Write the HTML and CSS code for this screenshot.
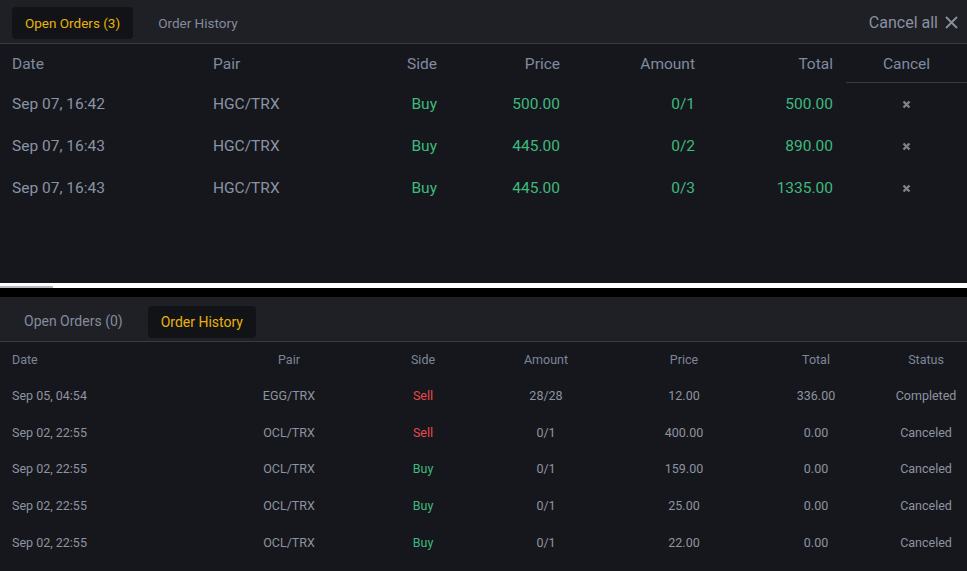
FILE: index.html
```html
<!DOCTYPE html>
<html lang="en">
<head>
  <meta charset="UTF-8" />
  <title>Orders</title>
  <link rel="stylesheet" href="styles.css">
</head>
<body>
  <section class="panel open-panel">
    <div class="panel-head">
      <div class="tabs">
        <span class="tab active">Open Orders (3)</span>
        <span class="tab">Order History</span>
      </div>
      <button class="cancel-all">Cancel all
        <svg width="13" height="13" viewBox="0 0 13 13"><path d="M1 1L12 12M12 1L1 12" stroke="#8a90a0" stroke-width="1.8" fill="none"/></svg>
      </button>
    </div>
    <div class="open-table">
      <div class="orow ohead">
        <span>Date</span><span>Pair</span><span class="r">Side</span><span class="r">Price</span><span class="r">Amount</span><span class="r">Total</span><span class="c cancel-head">Cancel</span>
      </div>
      <div class="orow">
        <span>Sep 07, 16:42</span><span>HGC/TRX</span><span class="r buy">Buy</span><span class="r buy">500.00</span><span class="r buy">0/1</span><span class="r buy">500.00</span><span class="c"><svg class="x" width="9" height="9" viewBox="0 0 9 9"><path d="M1.5 1.5L7.5 7.5M7.5 1.5L1.5 7.5" stroke="#7c818c" stroke-width="2.4" fill="none"/></svg></span>
      </div>
      <div class="orow">
        <span>Sep 07, 16:43</span><span>HGC/TRX</span><span class="r buy">Buy</span><span class="r buy">445.00</span><span class="r buy">0/2</span><span class="r buy">890.00</span><span class="c"><svg class="x" width="9" height="9" viewBox="0 0 9 9"><path d="M1.5 1.5L7.5 7.5M7.5 1.5L1.5 7.5" stroke="#7c818c" stroke-width="2.4" fill="none"/></svg></span>
      </div>
      <div class="orow">
        <span>Sep 07, 16:43</span><span>HGC/TRX</span><span class="r buy">Buy</span><span class="r buy">445.00</span><span class="r buy">0/3</span><span class="r buy">1335.00</span><span class="c"><svg class="x" width="9" height="9" viewBox="0 0 9 9"><path d="M1.5 1.5L7.5 7.5M7.5 1.5L1.5 7.5" stroke="#7c818c" stroke-width="2.4" fill="none"/></svg></span>
      </div>
    </div>
  </section>

  <div class="divider"><span class="divider-mark"></span></div>

  <section class="panel history-panel">
    <div class="panel-head small">
      <div class="tabs">
        <span class="tab">Open Orders (0)</span>
        <span class="tab active">Order History</span>
      </div>
    </div>
    <div class="hist-table">
      <div class="hrow hhead">
        <span class="l">Date</span><span>Pair</span><span>Side</span><span>Amount</span><span>Price</span><span>Total</span><span class="status">Status</span>
      </div>
      <div class="hrow">
        <span class="l">Sep 05, 04:54</span><span>EGG/TRX</span><span class="sell">Sell</span><span>28/28</span><span>12.00</span><span>336.00</span><span class="status">Completed</span>
      </div>
      <div class="hrow">
        <span class="l">Sep 02, 22:55</span><span>OCL/TRX</span><span class="sell">Sell</span><span>0/1</span><span>400.00</span><span>0.00</span><span class="status">Canceled</span>
      </div>
      <div class="hrow">
        <span class="l">Sep 02, 22:55</span><span>OCL/TRX</span><span class="buy">Buy</span><span>0/1</span><span>159.00</span><span>0.00</span><span class="status">Canceled</span>
      </div>
      <div class="hrow">
        <span class="l">Sep 02, 22:55</span><span>OCL/TRX</span><span class="buy">Buy</span><span>0/1</span><span>25.00</span><span>0.00</span><span class="status">Canceled</span>
      </div>
      <div class="hrow">
        <span class="l">Sep 02, 22:55</span><span>OCL/TRX</span><span class="buy">Buy</span><span>0/1</span><span>22.00</span><span>0.00</span><span class="status">Canceled</span>
      </div>
    </div>
  </section>
</body>
</html>
```

FILE: styles.css
```css
body {
  margin: 0;
  background: #16171c;
  font-family: Roboto, 'Liberation Sans', sans-serif;
  color: #8a93a6;
  overflow: hidden;
}

.panel {
  background: #16171c;
}

.open-panel {
  height: 283px;
}

.panel-head {
  height: 43px;
  background: #1f2026;
  border-bottom: 1px solid #3a3b41;
  display: flex;
  align-items: center;
  justify-content: space-between;
  padding: 0 9px 0 12px;
}

.tabs {
  display: flex;
}

.tab {
  font-size: 13.5px;
  color: #848b9c;
  padding: 7px 12px;
  border-radius: 4px;
}

.tab.active {
  background: #121317;
  color: #e8b20c;
}

.open-panel .tabs {
  margin-top: 2px;
}

.open-panel .tab {
  padding: 8px 13px;
}

.open-panel .tab + .tab {
  padding-left: 25px;
}

/* bottom panel head sits a bit lower */
.panel-head.small {
  height: 44px;
  padding-left: 12px;
  align-items: flex-end;
}

.history-panel .tabs {
  gap: 13px;
  padding-bottom: 3px;
}

.history-panel .tab {
  font-size: 14px;
}

.history-panel .tab.active {
  padding: 8px 13px;
}

.cancel-all {
  background: none;
  border: none;
  font-family: inherit;
  font-size: 16px;
  color: #8a90a0;
  display: flex;
  align-items: center;
  gap: 7px;
  padding: 0;
  margin-top: 2px;
}

/* open orders table */
.open-table {
  padding-left: 12px;
}

.orow {
  display: grid;
  grid-template-columns: 201px 140px 84px 123px 135px 138px 134px;
  height: 42px;
  align-items: center;
  font-size: 15.5px;
}

.orow.ohead {
  height: 39px;
  color: #808aa0;
}

.orow .r {
  text-align: right;
}

.orow .c {
  margin-left: 13px;
  display: flex;
  align-items: center;
  justify-content: center;
  height: 100%;
}

.cancel-head {
  border-bottom: 1px solid #3a3b41;
  box-sizing: border-box;
  padding-top: 1px;
}

.buy {
  color: #3dba7e;
}

.sell {
  color: #e8474d;
}

.divider {
  height: 5px;
  background: #ffffff;
  position: relative;
  border-bottom: 9px solid #000000;
}

.divider-mark {
  position: absolute;
  left: 0;
  bottom: 0;
  width: 53px;
  height: 2px;
  background: #b6bcc4;
}

/* order history table */
.history-panel {
  height: 274px;
}

.hist-table {
  padding-left: 12px;
}

.hrow {
  display: grid;
  grid-template-columns: 218px 118px 150px 96px 180px 84px 1fr;
  height: 36.8px;
  align-items: center;
  font-size: 12.5px;
  color: #8d93a0;
  text-align: center;
}

.hrow.hhead {
  height: 35px;
  color: #7d8699;
}

.hrow .l {
  text-align: left;
}

.hrow .status {
  padding-left: 27px;
}
```
